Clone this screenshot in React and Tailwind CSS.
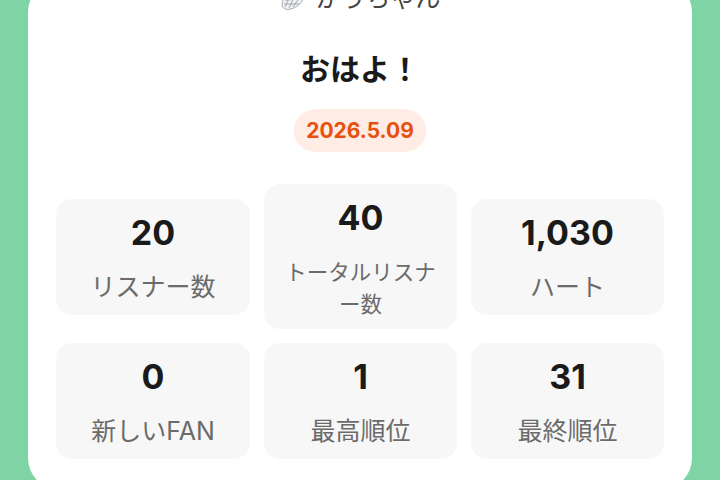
const stats = [
  { value: '20', label: 'リスナー数' },
  { value: '40', label: 'トータルリスナー数', small: true },
  { value: '1,030', label: 'ハート' },
  { value: '0', label: '新しいFAN' },
  { value: '1', label: '最高順位' },
  { value: '31', label: '最終順位' },
];

function ShellIcon() {
  return (
    <svg width="24" height="28" viewBox="0 0 24 28" className="shrink-0">
      <path d="M1 22 C1 14 6 6 14 4 C20 3 24 7 23 12 C22 18 17 23 10 25 C6 26 2 25 1 22 Z" fill="#eef0f2" stroke="#a9afb5" strokeWidth="1" />
      <path d="M4 23 L11 8 M8 24 L16 7 M12 23 L21 10 M4 16 L22 15 M3 20 L18 20" stroke="#9aa1a7" strokeWidth="0.9" fill="none" />
    </svg>
  );
}

export default function App() {
  return (
    <div className="h-[480px] w-[720px] overflow-hidden bg-[#7fd4a5] px-7 font-['Inter','Noto_Sans_CJK_JP',sans-serif]">
      <div className="-mt-[20px] flex h-[510px] flex-col items-center rounded-[32px] bg-white px-7">
        <div className="ml-[2px] flex h-[36px] items-center gap-2.5 text-[25px] leading-none text-[#444]">
          <ShellIcon />
          <span>かうちゃん</span>
        </div>
        <h1 className="mt-[32px] text-[30px] font-bold leading-[42px] text-[#1a1a1a]">おはよ！</h1>
        <div className="mt-[19px] flex h-[43px] items-center rounded-full bg-[#ffece4] px-[12px] text-[21px] font-bold text-[#e8500f]">
          2026.5.09
        </div>
        <div className="mt-[32px] grid w-full grid-cols-[194px_193px_193px] items-center gap-[14px]">
          {stats.map(s => (
            <div key={s.label} className="rounded-[16px] bg-[#f7f7f7] px-4 pb-[12px] pt-[12px] text-center">
              <div className="text-[34px] font-bold leading-[44px] text-[#1a1a1a]">{s.value}</div>
              <div className={s.small
                ? 'mt-[16px] -mb-[3px] text-[21.5px] leading-[32px] text-[#6b6b6b]'
                : 'mt-[16px] text-[25px] leading-[32px] text-[#6b6b6b]'}>{s.label}</div>
            </div>
          ))}
        </div>
      </div>
    </div>
  );
}
